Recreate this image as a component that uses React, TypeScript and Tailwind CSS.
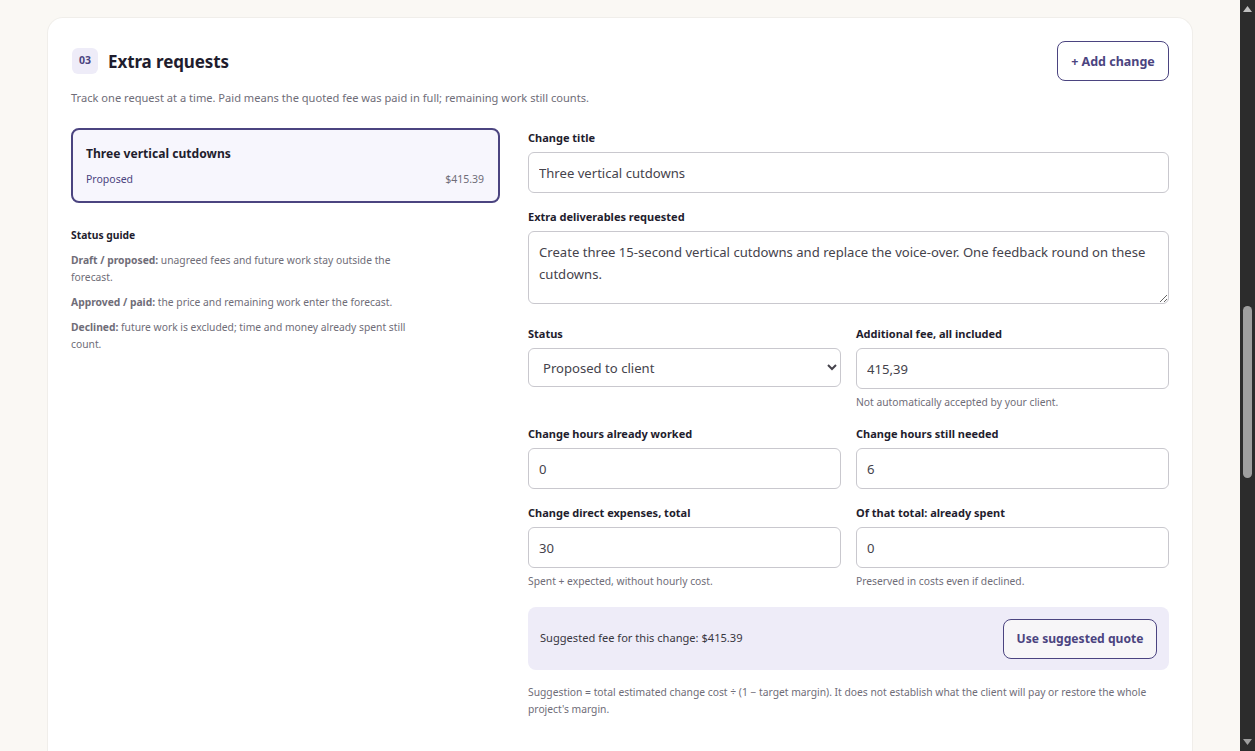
const font = "font-['Noto_Sans',sans-serif]";

function Label({ children }: { children: React.ReactNode }) {
  return <label className="block h-[15px] text-[11px] leading-[14px] font-bold text-[#1f1d2e]">{children}</label>;
}

function Hint({ children }: { children: React.ReactNode }) {
  return <p className="mt-[6px] text-[10.3px] leading-[14px] text-[#6f6d78]">{children}</p>;
}

function Field({ label, value, hint }: { label: string; value: string; hint?: string }) {
  return (
    <div className="min-w-0">
      <Label>{label}</Label>
      <input
        readOnly
        value={value}
        className="mt-[6px] block h-[41px] w-full rounded-[6px] border border-[#c9c8ce] bg-white px-[10px] text-[13.1px] text-[#45434c] outline-none"
      />
      {hint && <Hint>{hint}</Hint>}
    </div>
  );
}

export default function App() {
  return (
    <div className={`${font} flex h-screen overflow-hidden bg-[#faf8f4]`}>
      <main className="min-w-0 flex-1 px-[47px] pt-[17px]">
        <section className="rounded-t-[16px] border border-b-0 border-[#f0eeea] bg-white px-[23px] pt-[23px] pb-[40px]">
          <div className="flex items-start justify-between">
            <div className="ml-px flex items-start gap-[10px] pt-[7px]">
              <span className="flex h-[26px] w-[26px] items-center justify-center rounded-[6px] bg-[#eeecf8] text-[10.5px] font-bold text-[#4b4480]">
                03
              </span>
              <h2 className="pt-px text-[17px] leading-[26px] font-bold tracking-[-0.1px] text-[#1f1d2e]">Extra requests</h2>
            </div>
            <button className="h-[40px] w-[112px] rounded-[8px] border border-[#4b4480] bg-white pt-[2px] text-[12.5px] font-bold text-[#4b4480]">
              + Add change
            </button>
          </div>
          <p className="mt-[10px] text-[11.1px] leading-[14px] text-[#6f6d78]">
            Track one request at a time. Paid means the quoted fee was paid in full; remaining work still counts.
          </p>

          <div className="mt-[10px] grid grid-cols-[429px_641px] gap-x-[28px]">
            <aside className="pt-[13px]">
              <div className="h-[75px] rounded-[8px] border-2 border-[#4b4480] bg-[#f7f6fd] pt-[16px] pr-[14px] pl-[13px]">
                <div className="text-[12.1px] leading-[16px] font-bold text-[#1f1d2e]">Three vertical cutdowns</div>
                <div className="mt-[10px] flex justify-between text-[10.5px] leading-[14px]">
                  <span className="text-[#4b4480]">Proposed</span>
                  <span className="text-[#6f6d78]">$415.39</span>
                </div>
              </div>
              <div className="mt-[24px] w-[340px] text-[10.3px] leading-[17px] text-[#6f6d78]">
                <h3 className="font-bold text-[#1f1d2e]">Status guide</h3>
                <p className="mt-[8px]"><b>Draft / proposed:</b> unagreed fees and future work stay outside the forecast.</p>
                <p className="mt-[8px]"><b>Approved / paid:</b> the price and remaining work enter the forecast.</p>
                <p className="mt-[8px]"><b>Declined:</b> future work is excluded; time and money already spent still count.</p>
              </div>
            </aside>

            <div className="pt-[16px]">
              <Field label="Change title" value="Three vertical cutdowns" />
              <div className="mt-[17px]">
                <Label>Extra deliverables requested</Label>
                <textarea
                  readOnly
                  value="Create three 15-second vertical cutdowns and replace the voice-over. One feedback round on these cutdowns."
                  className="mt-[6px] block h-[73px] w-full rounded-[6px] border border-[#c9c8ce] bg-white px-[10px] py-[9px] text-[13.1px] leading-[22px] text-[#45434c] outline-none"
                />
              </div>
              <div className="mt-[23px] grid grid-cols-2 gap-x-[15px]">
                <div>
                  <Label>Status</Label>
                  <select className="mt-[6px] block h-[39px] w-full rounded-[6px] border border-[#c9c8ce] bg-white px-[10px] text-[13.1px] text-[#45434c] outline-none [appearance:auto]">
                    <option>Proposed to client</option>
                  </select>
                </div>
                <Field label="Additional fee, all included" value="415,39" hint="Not automatically accepted by your client." />
              </div>
              <div className="mt-[18px] grid grid-cols-2 gap-x-[15px]">
                <Field label="Change hours already worked" value="0" />
                <Field label="Change hours still needed" value="6" />
              </div>
              <div className="mt-[17px] grid grid-cols-2 gap-x-[15px]">
                <Field label="Change direct expenses, total" value="30" hint="Spent + expected, without hourly cost." />
                <Field label="Of that total: already spent" value="0" hint="Preserved in costs even if declined." />
              </div>
              <div className="mt-[19px] flex h-[63px] items-center justify-between rounded-[8px] bg-[#eeecf8] px-[12px]">
                <span className="text-[11.1px] text-[#38363f]">Suggested fee for this change: $415.39</span>
                <button className="h-[40px] w-[154px] rounded-[8px] border border-[#4b4480] bg-[#f7f6f8] pt-[2px] text-[12.1px] font-bold text-[#4b4480]">
                  Use suggested quote
                </button>
              </div>
              <p className="mt-[14px] text-[10.3px] leading-[17px] text-[#6f6d78]">
                Suggestion = total estimated change cost ÷ (1 − target margin). It does not establish what the client will pay or restore the whole project's margin.
              </p>
            </div>
          </div>
        </section>
      </main>
      <div className="flex w-[15px] shrink-0 flex-col items-center bg-[#2c2c2c]">
        <svg width="9" height="6" viewBox="0 0 9 6" className="mt-[6px] fill-[#c0c0c0]"><path d="M4.5 0 9 6H0z" /></svg>
        <div className="mt-[294px] h-[172px] w-[9px] rounded-full bg-[#9f9f9f]" />
        <svg width="9" height="6" viewBox="0 0 9 6" className="mt-auto mb-[6px] fill-[#9f9f9f]"><path d="M0 0h9L4.5 6z" /></svg>
      </div>
    </div>
  );
}
